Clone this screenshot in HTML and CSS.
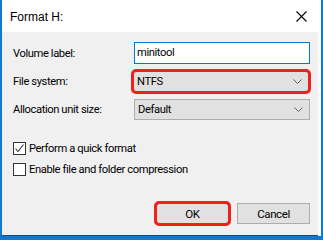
FILE: index.html
```html
<!DOCTYPE html>
<html>
<head>
<meta charset="utf-8">
<link rel="stylesheet" href="styles.css">
</head>
<body>
<div class="win">
  <div class="titlebar">
    <span class="title">Format H:</span>
    <svg class="close" width="11" height="11" viewBox="0 0 11 11"><path d="M0.5 0.5 L10.5 10.5 M10.5 0.5 L0.5 10.5" stroke="#000" stroke-width="1.1" fill="none"/></svg>
  </div>
  <div class="client">
    <div class="form">
      <label class="lbl">Volume label:</label>
      <div class="input">minitool</div>
      <label class="lbl">File system:</label>
      <div class="combo hl"><span>NTFS</span><svg class="chev" width="9" height="5" viewBox="0 0 9 5"><path d="M0.5 0.5 L4.5 4.5 L8.5 0.5" stroke="#606060" fill="none"/></svg></div>
      <label class="lbl">Allocation unit size:</label>
      <div class="combo"><span>Default</span><svg class="chev" width="9" height="5" viewBox="0 0 9 5"><path d="M0.5 0.5 L4.5 4.5 L8.5 0.5" stroke="#606060" fill="none"/></svg></div>
    </div>
    <div class="checks">
      <div class="check"><span class="box"><svg width="11" height="11" viewBox="0 0 11 11"><path d="M1.5 5.5 L4 8.5 L9.5 1.5" stroke="#333" stroke-width="1.1" fill="none"/></svg></span>Perform a quick format</div>
      <div class="check"><span class="box"></span>Enable file and folder compression</div>
    </div>
    <div class="buttons">
      <div class="btn ok">OK</div>
      <div class="btn">Cancel</div>
    </div>
  </div>
</div>
</body>
</html>
```
FILE: styles.css
```css
html, body {
  margin: 0;
  padding: 0;
}
body {
  background: #1479cc;
  width: 323px;
  height: 240px;
  overflow: hidden;
  font-family: Roboto, "Liberation Sans", sans-serif;
  font-size: 11.2px;
  letter-spacing: -0.4px;
  color: #000;
}
.win {
  margin-left: 2px;
  width: 316px;
  height: 236px;
  border-right: 3px solid #fff;
  background: #fff;
  display: flex;
  flex-direction: column;
}
.titlebar {
  height: 32px;
  flex: none;
  display: flex;
  align-items: center;
  justify-content: space-between;
  padding: 0 11px 0 8px;
  background: #fff;
}
.title {
  font-family: "Liberation Sans", sans-serif;
  font-size: 12px;
  letter-spacing: 0;
  padding-top: 1px;
}
.close {
  display: block;
}
.client {
  flex: 1;
  background: #f0f0f0;
  padding: 10px 8px 0 11px;
  border-bottom: 1px solid #0a4f86;
  display: flex;
  flex-direction: column;
}
.form {
  display: grid;
  grid-template-columns: 121px 176px;
  row-gap: 7px;
  align-items: center;
}
.input {
  height: 22px;
  box-sizing: border-box;
  border: 1px solid #0078d7;
  background: #fff;
  padding: 3px 0 0 2px;
}
.combo {
  height: 21px;
  box-sizing: border-box;
  border: 1px solid #adadad;
  background: #e1e1e1;
  display: flex;
  align-items: center;
  justify-content: space-between;
  padding: 0 6px 0 3px;
}
.combo.hl {
  outline: 3px solid #f0201c;
  outline-offset: -1px;
  border-radius: 3px;
  margin-left: -1px;
  margin-right: 1px;
}
.chev {
  display: block;
}
.checks {
  margin-top: 22px;
  display: flex;
  flex-direction: column;
  gap: 8px;
}
.check {
  display: flex;
  align-items: center;
  height: 13px;
}
.box {
  width: 13px;
  height: 13px;
  box-sizing: border-box;
  border: 1px solid #333;
  background: #fff;
  margin-right: 3px;
  display: flex;
  align-items: center;
  justify-content: center;
}
.box svg {
  display: block;
}
.buttons {
  margin-top: 27px;
  display: flex;
  justify-content: flex-end;
  gap: 8px;
}
.btn {
  width: 73px;
  height: 21px;
  box-sizing: border-box;
  border: 1px solid #adadad;
  background: #e1e1e1;
  display: flex;
  align-items: center;
  justify-content: center;
  font-size: 11.5px;
}
.btn.ok {
  border: 1px solid #0078d7;
  outline: 3px solid #f0201c;
  outline-offset: -1px;
  border-radius: 3px;
}
```
